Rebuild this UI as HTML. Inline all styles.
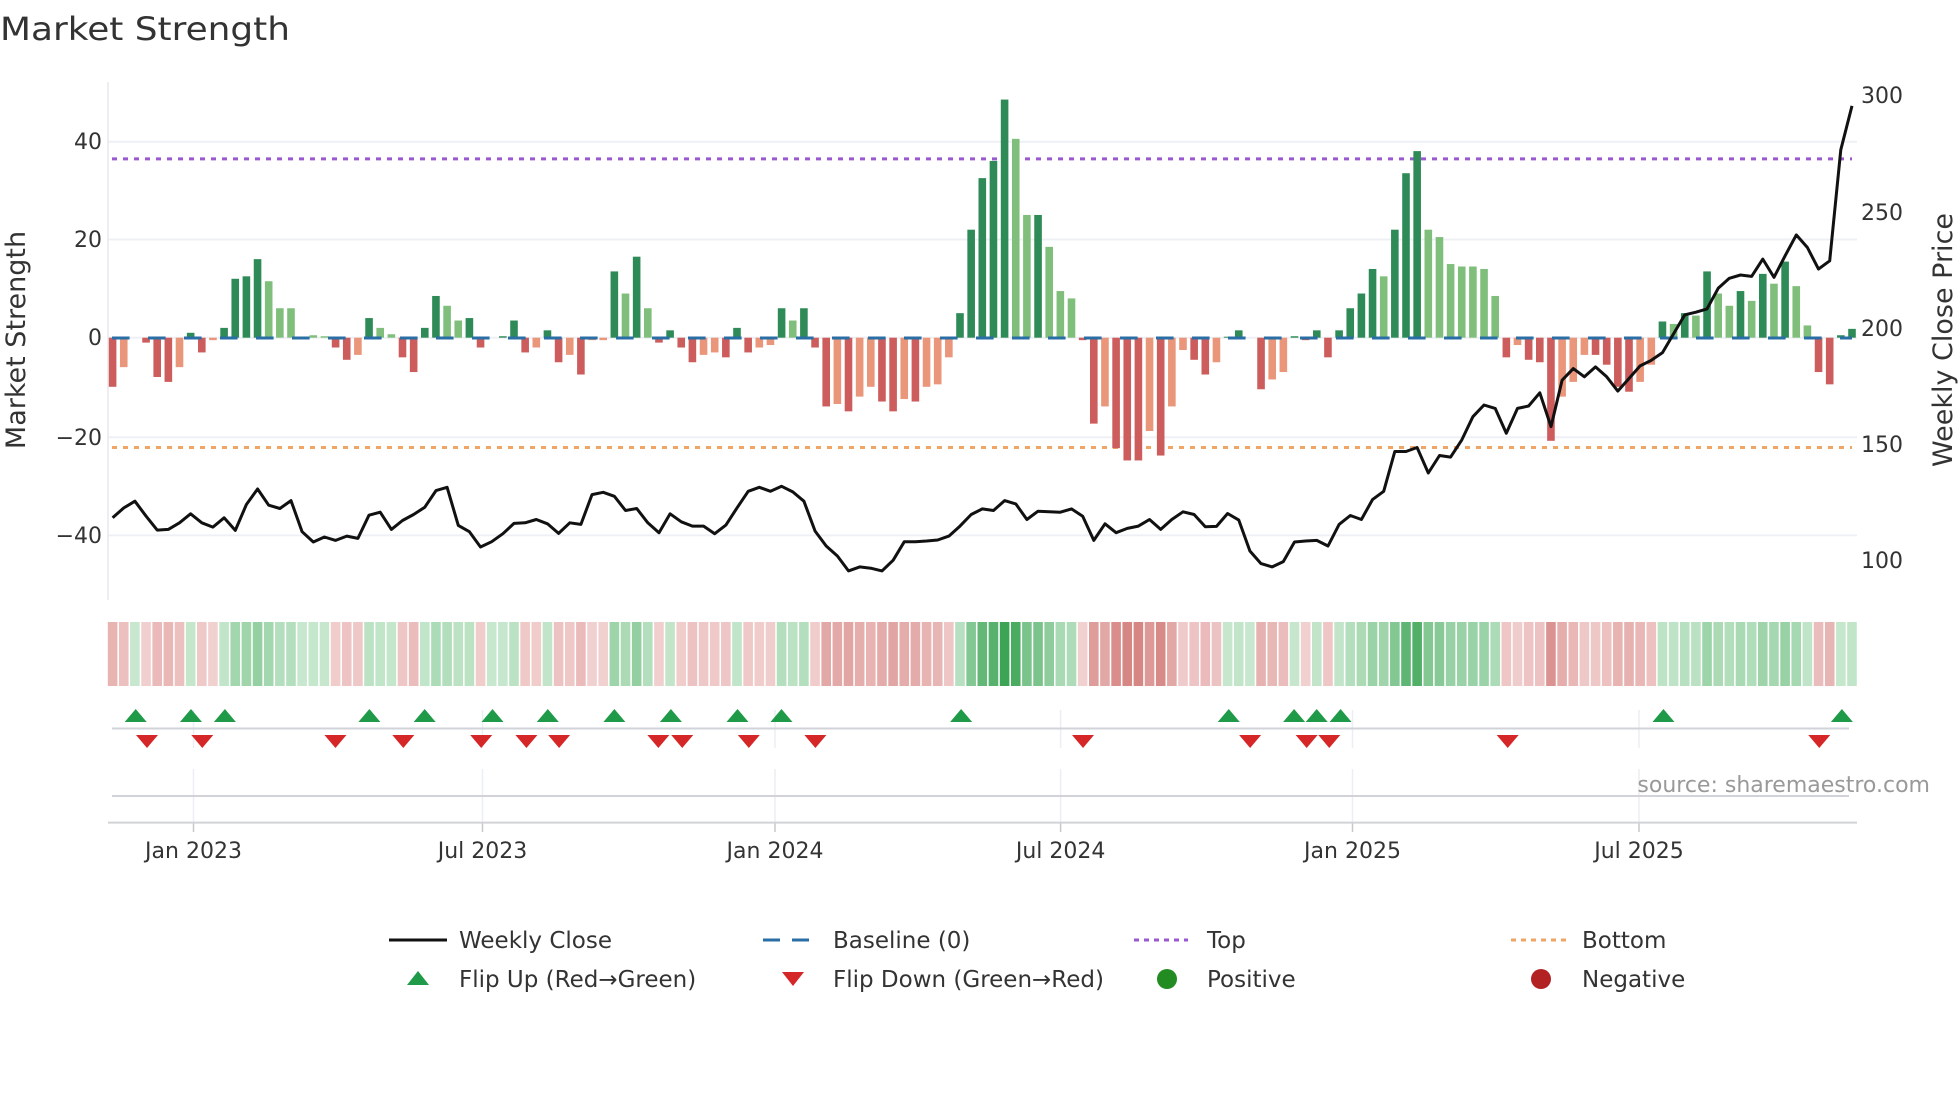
<!DOCTYPE html>
<html><head><meta charset="utf-8"><style>
html,body{margin:0;padding:0;background:#fff;}
svg{display:block;}
text{font-family:"DejaVu Sans","Liberation Sans",sans-serif;fill:#333;}
</style></head><body>
<svg id="s" width="1960" height="1102" viewBox="0 0 1960 1102" xmlns="http://www.w3.org/2000/svg">
<text x="0" y="40" font-size="32" textLength="290" lengthAdjust="spacingAndGlyphs">Market Strength</text>
<g id="grid"></g>
<line x1="108" y1="82" x2="108" y2="600" stroke="#e6e8ee" stroke-width="1.5"/>
<line x1="112" y1="158.9" x2="1852" y2="158.9" stroke="#9b59d0" stroke-width="3" stroke-dasharray="5,6"/>
<line x1="112" y1="447.5" x2="1852" y2="447.5" stroke="#efa565" stroke-width="3" stroke-dasharray="5,6"/>
<g id="bars"></g>
<line x1="112" y1="338" x2="1852" y2="338" stroke="#2a6ea6" stroke-width="3" stroke-dasharray="17.6,18.4"/>
<polyline id="price" fill="none" stroke="#111" stroke-width="3" stroke-linejoin="round"/>
<g font-size="22" text-anchor="end">
<text x="102" y="149">40</text><text x="102" y="247">20</text><text x="102" y="345">0</text><text x="102" y="445">−20</text><text x="102" y="543">−40</text>
</g>
<g font-size="22">
<text x="1861" y="103">300</text><text x="1861" y="220">250</text><text x="1861" y="336">200</text><text x="1861" y="452">150</text><text x="1861" y="568">100</text>
</g>
<text transform="translate(25,340) rotate(-90)" font-size="27" text-anchor="middle">Market Strength</text>
<text transform="translate(1952,340) rotate(-90)" font-size="27" text-anchor="middle">Weekly Close Price</text>
<g id="heat"></g>
<g id="vgrid"></g>
<line x1="112" y1="728.5" x2="1849" y2="728.5" stroke="#d2d3d8" stroke-width="2"/>
<line x1="112" y1="796" x2="1849" y2="796" stroke="#d2d3d8" stroke-width="2"/>
<line x1="108" y1="822.6" x2="1857" y2="822.6" stroke="#d2d3d8" stroke-width="2"/>
<g id="tri"></g>
<text x="1930" y="792" font-size="22" text-anchor="end" style="fill:#999">source: sharemaestro.com</text>
<g font-size="22" text-anchor="middle">
<text x="193.5" y="858">Jan 2023</text><text x="482.5" y="858">Jul 2023</text><text x="775" y="858">Jan 2024</text><text x="1060.6" y="858">Jul 2024</text><text x="1352.5" y="858">Jan 2025</text><text x="1639" y="858">Jul 2025</text>
</g>
<!-- legend -->
<g transform="translate(0,-4)">
<line x1="389" y1="944" x2="447" y2="944" stroke="#111" stroke-width="3"/>
<text x="459" y="952" font-size="23">Weekly Close</text>
<line x1="763" y1="944" x2="819" y2="944" stroke="#2a6ea6" stroke-width="3" stroke-dasharray="17,12"/>
<text x="833" y="952" font-size="23">Baseline (0)</text>
<line x1="1134" y1="944" x2="1188" y2="944" stroke="#9b59d0" stroke-width="3" stroke-dasharray="5,5"/>
<text x="1207" y="952" font-size="23">Top</text>
<line x1="1511" y1="944" x2="1568" y2="944" stroke="#efa565" stroke-width="3" stroke-dasharray="5,5"/>
<text x="1582" y="952" font-size="23">Bottom</text>
<polygon points="407,989 429,989 418,975" fill="#1e9a48"/>
<text x="459" y="991" font-size="23">Flip Up (Red→Green)</text>
<polygon points="782,976 804,976 793,990" fill="#d62728"/>
<text x="833" y="991" font-size="23">Flip Down (Green→Red)</text>
<circle cx="1167" cy="983" r="10" fill="#228b22"/>
<text x="1207" y="991" font-size="23">Positive</text>
<circle cx="1541" cy="983" r="10" fill="#b22222"/>
<text x="1582" y="991" font-size="23">Negative</text>
</g>
</svg>
<script>
var NS="http://www.w3.org/2000/svg";
function el(p,t,a){var e=document.createElementNS(NS,t);for(var k in a)e.setAttribute(k,a[k]);document.getElementById(p).appendChild(e);return e;}
[141.7,239.5,337.7,437.2,535.4].forEach(function(y){el("grid","line",{x1:108,x2:1857,y1:y,y2:y,stroke:"#eef0f5","stroke-width":2});});
var V="-10r,-6o,0g,-1r,-8r,-9r,-6o,1g,-3r,-0.5o,2g,12g,12.5g,16g,11.5l,6l,6l,0g,0.5l,0.3l,-2r,-4.5r,-3.5o,4g,2l,0.7l,-4r,-7r,2g,8.5g,6.5l,3.5l,4g,-2r,0g,0.3g,3.5g,-3r,-2o,1.5g,-5r,-3.5o,-7.5r,-0.5o,-0.5o,13.5g,9l,16.5g,6l,-1r,1.5g,-2r,-5r,-3.5o,-3o,-4r,2g,-3r,-2o,-1.5o,6g,3.5l,6g,-2r,-14r,-13.5o,-15r,-12o,-10o,-13r,-15r,-12.5o,-13r,-10o,-9.5o,-4o,5g,22g,32.5g,36g,48.5g,40.5l,25l,25g,18.5l,9.5l,8l,-0.5r,-17.5r,-14o,-22.5r,-25r,-25r,-19o,-24r,-14o,-2.5o,-4.5r,-7.5r,-5o,0.2g,1.5g,0g,-10.5r,-8.5o,-7o,0.3g,-0.5r,1.5g,-4r,1.5g,6g,9g,14g,12.5l,22g,33.5g,38g,22l,20.5l,15l,14.5l,14.5l,14l,8.5l,-4r,-1.5o,-4.5r,-5r,-21r,-12o,-9o,-3.5o,-3.5r,-5.5r,-10r,-11r,-9o,-5.5o,3.3g,2.8l,5g,4.5l,13.5g,9l,6.5l,9.5g,7.5l,13g,11l,15.5g,10.5l,2.5l,-7r,-9.5r,0.5g,1.8g".split(",");
var C={g:"#2e8b57",l:"#7fbf7b",r:"#cd5c5c",o:"#e9967a"};
var x0=112.6,dx=(1852-112.6)/156,z=337.7,u=4.91;
function mix(a,b,t){return "rgb("+[0,1,2].map(function(i){return Math.round(a[i]+(b[i]-a[i])*t);}).join(",")+")";}
V.forEach(function(s,i){var v=parseFloat(s),c=s.slice(-1),x=x0+i*dx;
 if(Math.abs(v)>0.05){var h=Math.abs(v)*u;el("bars","rect",{x:x-3.8,width:7.6,y:v>0?z-h:z,height:h,fill:C[c]});}
 var t=Math.min(Math.abs(v)/45,1),col;
 if(v>=0)col=mix([214,239,219],[60,165,85],0.1+0.9*t);else col=mix([245,218,218],[214,135,132],0.1+0.9*Math.min(Math.abs(v)/25,1));
 el("heat","rect",{x:x-4.8,width:9.6,y:622,height:64,fill:col});
});
var P=[1320,1290,1270,1315,1357,1355,1335,1308,1335,1348,1320,1358,1280,1233,1282,1292,1268,1362,1393,1378,1388,1375,1382,1312,1303,1355,1328,1310,1288,1238,1228,1343,1362,1408,1392,1368,1337,1335,1325,1338,1367,1335,1340,1250,1243,1255,1298,1292,1335,1365,1308,1332,1345,1345,1368,1342,1290,1240,1228,1240,1225,1242,1270,1360,1405,1435,1480,1468,1472,1480,1448,1392,1392,1390,1387,1375,1345,1310,1293,1298,1268,1278,1325,1300,1302,1303,1293,1315,1388,1338,1365,1352,1345,1325,1355,1325,1302,1310,1347,1346,1307,1327,1420,1458,1468,1452,1393,1390,1388,1405,1340,1313,1325,1265,1240,1120,1120,1108,1185,1132,1137,1085,1015,980,990,1065,990,983,943,1045,905,870,895,865,895,938,900,862,845,822,765,708,700,690,628,598,588,592,540,595,530,467,505,570,545,210,78];
document.getElementById("price").setAttribute("points",P.map(function(y,i){return (x0+i*dx).toFixed(1)+","+(80+y/3.015).toFixed(1);}).join(" "));
[193.5,482.5,775,1060.6,1352.5,1639].forEach(function(x){
 el("vgrid","line",{x1:x,x2:x,y1:710,y2:748,stroke:"#eceef3","stroke-width":1.5});
 el("vgrid","line",{x1:x,x2:x,y1:769,y2:822,stroke:"#eceef3","stroke-width":1.5});
 el("vgrid","line",{x1:x,x2:x,y1:823,y2:832,stroke:"#c8c8cc","stroke-width":1.5});
});
var k=1.2564;
[108,152,179,294,338,392,436,489,534,587,622,765,978,1030,1048,1067,1324,1466].forEach(function(d){var x=d*k;el("tri","polygon",{points:(x-11)+",722 "+(x+11)+",722 "+x+",709",fill:"#1e9a48"});});
[117,161,267,321,383,419,445,524,543,596,649,862,995,1040,1058,1200,1448].forEach(function(d){var x=d*k;el("tri","polygon",{points:(x-11)+",735 "+(x+11)+",735 "+x+",748",fill:"#d62728"});});
</script>
</body></html>
